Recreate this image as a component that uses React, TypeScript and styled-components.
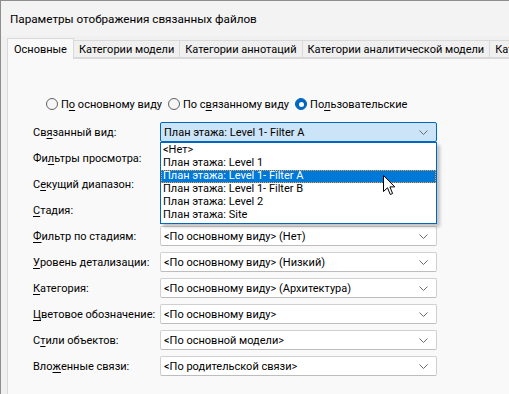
import React from 'react'
import styled, { createGlobalStyle } from 'styled-components'

const GlobalStyle = createGlobalStyle`
    html, body {
        margin: 0;
        padding: 0;
        background: #f9f9f9;
    }
    body {
        font-family: Roboto, 'Noto Sans', sans-serif;
        font-size: 11px;
        color: #000;
    }
`

const Window = styled.div`
    width: 509px;
    height: 394px;
    box-sizing: border-box;
    overflow: hidden;
    display: flex;
    flex-direction: column;
    background: #f0f0f0;
    border-top: 1px solid #8e8e8e;
    border-left: 1px solid #8e8e8e;
`

const TitleBar = styled.div`
    height: 35px;
    flex: none;
    display: flex;
    align-items: center;
    padding-left: 9px;
    font-size: 11.7px;
    background: #f3f3f3;
    white-space: nowrap;
`

const TabStrip = styled.div`
    display: flex;
    align-items: flex-end;
    height: 22px;
    flex: none;
    padding-left: 6px;
    white-space: nowrap;
    position: relative;
    z-index: 1;
`

const Tab = styled.div<{ $active?: boolean }>`
    box-sizing: border-box;
    display: flex;
    align-items: center;
    padding: 0 ${({ $active }) => ($active ? '6px' : '5px')};
    height: ${({ $active }) => ($active ? '21px' : '18px')};
    margin-bottom: ${({ $active }) => ($active ? '-1px' : '0')};
    margin-left: -1px;
    background: ${({ $active }) => ($active ? '#f9f9f9' : '#f0f0f0')};
    border: 1px solid #d9d9d9;
    border-bottom: ${({ $active }) => ($active ? 'none' : '1px solid #d9d9d9')};
    &:first-child {
        margin-left: 0;
    }
`

const Panel = styled.div`
    flex: 1;
    margin-left: 6px;
    background: #f9f9f9;
    border-top: 1px solid #d9d9d9;
    border-left: 1px solid #d9d9d9;
    padding: 38px 0 0 25px;
`

const RadioRow = styled.div`
    display: flex;
    align-items: center;
    gap: 6px;
    height: 14px;
    margin-left: 13px;
    white-space: nowrap;
`

const RadioItem = styled.label`
    display: inline-flex;
    align-items: center;
    gap: 3px;
`

const RadioMark = styled.span<{ $checked?: boolean }>`
    box-sizing: border-box;
    width: 12px;
    height: 12px;
    border-radius: 50%;
    display: inline-flex;
    align-items: center;
    justify-content: center;
    border: 1px solid ${({ $checked }) => ($checked ? '#0067c0' : '#626262')};
    background: ${({ $checked }) => ($checked ? '#0067c0' : '#f6f6f6')};
    &::after {
        content: '';
        display: ${({ $checked }) => ($checked ? 'block' : 'none')};
        width: 5px;
        height: 5px;
        border-radius: 50%;
        background: #fff;
    }
`

const Key = styled.span`
    text-decoration: underline;
    text-underline-offset: 2px;
`

const Form = styled.div`
    display: grid;
    grid-template-columns: 127px 277px;
    grid-auto-rows: 20px;
    row-gap: 6px;
    margin-top: 11px;
    white-space: nowrap;
`

const Label = styled.div`
    display: flex;
    align-items: center;
`

const ComboWrap = styled.div`
    position: relative;
`

const Combo = styled.div<{ $open?: boolean }>`
    box-sizing: border-box;
    height: 20px;
    display: flex;
    align-items: center;
    justify-content: space-between;
    padding: 0 8px 0 3px;
    border: 1px solid ${({ $open }) => ($open ? '#0067c0' : '#d0d0d0')};
    border-bottom-color: ${({ $open }) => ($open ? '#0067c0' : '#bdbdbd')};
    border-radius: 2px;
    background: ${({ $open }) => ($open ? '#cce4f7' : '#fff')};
`

const DropList = styled.div`
    position: absolute;
    top: 100%;
    left: 0;
    width: 277px;
    box-sizing: border-box;
    padding: 1px 0;
    background: #fff;
    border: 1px solid #0067c0;
    box-shadow: 3px 3px 3px rgba(0, 0, 0, 0.22);
    z-index: 5;
`

const DropItem = styled.div<{ $hot?: boolean }>`
    box-sizing: border-box;
    height: 13px;
    line-height: 12px;
    padding-left: 2px;
    background: ${({ $hot }) => ($hot ? '#0078d7' : 'transparent')};
    color: ${({ $hot }) => ($hot ? '#fff' : '#000')};
    outline: ${({ $hot }) => ($hot ? '1px dotted #f0a23c' : 'none')};
    outline-offset: -1px;
`

const Cursor = styled.svg`
    position: absolute;
    left: 222px;
    top: 32px;
`

function Chevron() {
    return (
        <svg width="9" height="5" viewBox="0 0 9 5">
            <polyline points="0.5,0.5 4.5,4.5 8.5,0.5" fill="none" stroke="#6a6a6a" strokeWidth="1" />
        </svg>
    )
}

const rows: { label: React.ReactNode; value: string }[] = [
    { label: <>Фи<Key>л</Key>ьтры просмотра:</>, value: '' },
    { label: <>С<Key>е</Key>кущий диапазон:</>, value: '' },
    { label: <><Key>С</Key>тадия:</>, value: '' },
    { label: <><Key>Ф</Key>ильтр по стадиям:</>, value: '<По основному виду> (Нет)' },
    { label: <><Key>У</Key>ровень детализации:</>, value: '<По основному виду> (Низкий)' },
    { label: <><Key>К</Key>атегория:</>, value: '<По основному виду> (Архитектура)' },
    { label: <><Key>Ц</Key>ветовое обозначение:</>, value: '<По основному виду>' },
    { label: <>С<Key>т</Key>или объектов:</>, value: '<По основной модели>' },
    { label: <>Вло<Key>ж</Key>енные связи:</>, value: '<По родительской связи>' },
]

const options = [
    '<Нет>',
    'План этажа: Level 1',
    'План этажа: Level 1- Filter A',
    'План этажа: Level 1- Filter B',
    'План этажа: Level 2',
    'План этажа: Site',
]

export default function App() {
    return (
        <>
            <GlobalStyle />
            <Window>
                <TitleBar>Параметры отображения связанных файлов</TitleBar>
                <TabStrip>
                    <Tab $active>Основные</Tab>
                    <Tab>Категории модели</Tab>
                    <Tab>Категории аннотаций</Tab>
                    <Tab>Категории аналитической модели</Tab>
                    <Tab>Кат</Tab>
                </TabStrip>
                <Panel>
                    <RadioRow>
                        <RadioItem>
                            <RadioMark />
                            <span>П<Key>о</Key> основному виду</span>
                        </RadioItem>
                        <RadioItem>
                            <RadioMark />
                            <span>По с<Key>в</Key>язанному виду</span>
                        </RadioItem>
                        <RadioItem>
                            <RadioMark $checked />
                            <span>По<Key>л</Key>ьзовательские</span>
                        </RadioItem>
                    </RadioRow>
                    <Form>
                        <Label>Св<Key>я</Key>занный вид:</Label>
                        <ComboWrap>
                            <Combo $open>
                                <span>План этажа: Level 1- Filter A</span>
                                <Chevron />
                            </Combo>
                            <DropList>
                                {options.map((o, i) => (
                                    <DropItem key={o} $hot={i === 2}>
                                        {o}
                                    </DropItem>
                                ))}
                                <Cursor width="13" height="21" viewBox="0 0 13 21">
                                    <path
                                        d="M0.5 0.5 L0.5 16.5 L4.5 12.8 L7.3 19.5 L9.6 18.5 L6.9 11.9 L11.8 11.9 Z"
                                        fill="#fff"
                                        stroke="#000"
                                        strokeWidth="1"
                                        strokeLinejoin="round"
                                    />
                                </Cursor>
                            </DropList>
                        </ComboWrap>
                        {rows.map((r, i) => (
                            <React.Fragment key={i}>
                                <Label>{r.label}</Label>
                                <Combo>
                                    <span>{r.value}</span>
                                    <Chevron />
                                </Combo>
                            </React.Fragment>
                        ))}
                    </Form>
                </Panel>
            </Window>
        </>
    )
}
